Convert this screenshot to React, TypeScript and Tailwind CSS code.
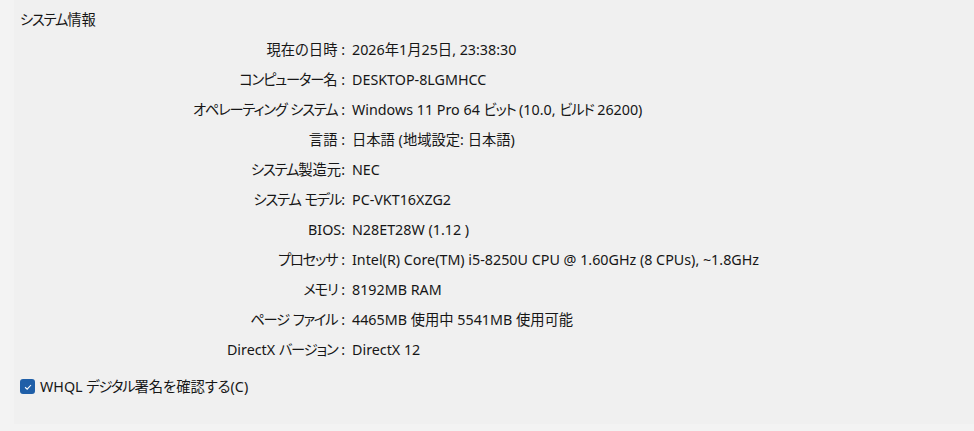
import type { ReactNode } from 'react';

const rows: [string, string][] = [
  ['現在の日時 :', '2026年1月25日, 23:38:30'],
  ['コンピューター名 :', 'DESKTOP-8LGMHCC'],
  ['オペレーティング システム :', 'Windows 11 Pro 64 ビット (10.0, ビルド 26200)'],
  ['言語 :', '日本語 (地域設定: 日本語)'],
  ['システム製造元:', 'NEC'],
  ['システム モデル:', 'PC-VKT16XZG2'],
  ['BIOS:', 'N28ET28W (1.12 )'],
  ['プロセッサ :', 'Intel(R) Core(TM) i5-8250U CPU @ 1.60GHz (8 CPUs), ~1.8GHz'],
  ['メモリ :', '8192MB RAM'],
  ['ページ ファイル :', '4465MB 使用中 5541MB 使用可能'],
  ['DirectX バージョン :', 'DirectX 12'],
];

// カタカナ部分だけ詰める (UI フォントのカナは幅が狭い)
function Jp({ text }: { text: string }) {
  const parts = text.split(/([\u30a1-\u30fc]+)/);
  const out: ReactNode[] = parts.map((p, i) =>
    /^[\u30a1-\u30fc]+$/.test(p) ? (
      <span key={i} className="tracking-[-1.2px]">{p}</span>
    ) : (
      p
    )
  );
  return <>{out}</>;
}

export default function App() {
  return (
    <div
      className="w-[974px] h-[431px] bg-[#f3f3f3] text-[14.3px] text-[#161616] overflow-hidden [font-feature-settings:'palt']"
      style={{ fontFamily: '"Noto Sans", "Noto Sans CJK JP", sans-serif' }}
    >
      <div className="h-[424px] ml-[14px] bg-[#f0f0f0] pt-[5px]">
        {/* 見出し */}
        <div className="h-[30px] flex items-center pl-[6px]">
          <Jp text="システム情報" />
        </div>

        {/* 情報の行 */}
        <div className="flex flex-col">
          {rows.map(([label, value]) => (
            <div key={label} className="h-[30px] flex items-center">
              <div className="w-[331px] text-right whitespace-pre">
                <Jp text={label} />
              </div>
              <div className="pl-[7px] whitespace-pre">
                <Jp text={value} />
              </div>
            </div>
          ))}
        </div>

        {/* チェックボックス */}
        <label className="mt-[11px] flex items-center gap-[5px] pl-[6px]">
          <span className="w-[15px] h-[15px] rounded-[3px] bg-[#1f5fa8] flex items-center justify-center">
            <svg viewBox="0 0 12 12" className="w-[10px] h-[10px]" fill="none" stroke="white" strokeWidth="1.3">
              <path d="M2.5 6.3 L5 8.6 L9.6 3.6" />
            </svg>
          </span>
          <span>
            <Jp text="WHQL デジタル署名を確認する(C)" />
          </span>
        </label>
      </div>
    </div>
  );
}
